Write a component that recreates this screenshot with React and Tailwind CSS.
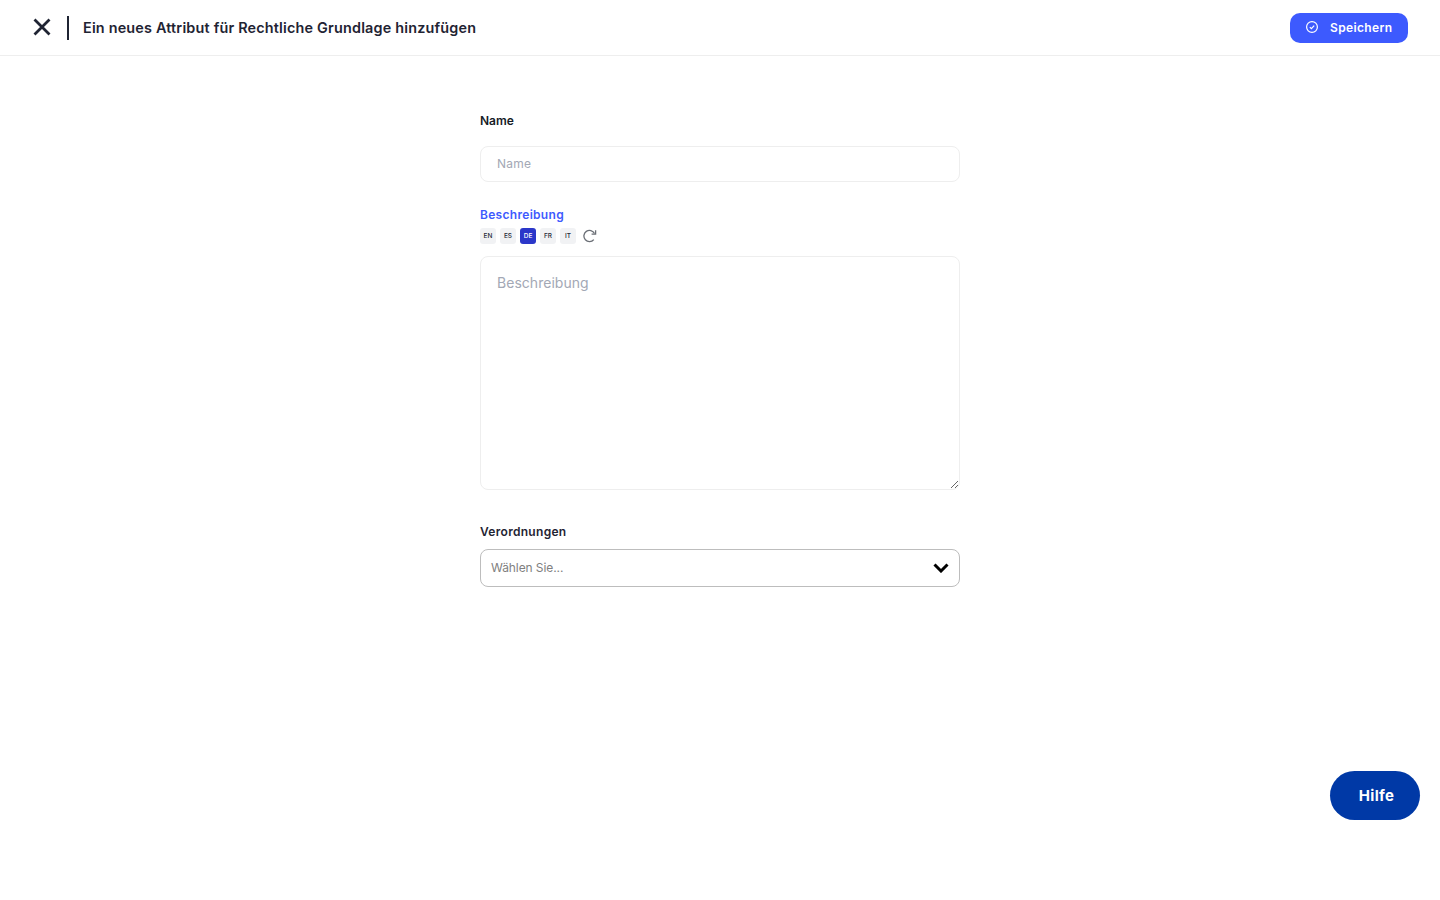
import { useState } from 'react'

const languages = ['EN', 'ES', 'DE', 'FR', 'IT']

function LangChip({ code, active, onClick }) {
  return (
    <button
      onClick={onClick}
      className={`flex h-4 w-4 items-center justify-center rounded-[3px] pt-px text-[6.5px] font-medium ${
        active ? 'bg-[#2b37c9] text-white' : 'bg-[#f1f2f4] text-[#1f2937]'
      }`}
    >
      {code}
    </button>
  )
}

export default function App() {
  const [lang, setLang] = useState('DE')

  return (
    <div className="min-h-[900px] bg-white font-['Inter',sans-serif] text-[#1f2433]">
      {/* Top bar */}
      <header className="flex h-[56px] items-center justify-between border-b border-[#eeeeee] pl-[27.5px] pr-[32px]">
        <div className="flex items-center">
          <button className="flex h-7 w-7 items-center justify-center pb-px">
            <svg width="18" height="18" viewBox="0 0 18 18" fill="none" stroke="currentColor" strokeWidth="2.8">
              <path d="M1.5 1.5 16.5 16.5M16.5 1.5 1.5 16.5" />
            </svg>
          </button>
          <div className="ml-[11px] h-6 w-[2px] bg-[#1f2433]" />
          <h1 className="ml-[14.5px] text-[14.4px] font-semibold tracking-[0.19px]">
            Ein neues Attribut für Rechtliche Grundlage hinzufügen
          </h1>
        </div>
        <button className="flex h-[30px] w-[118px] items-center rounded-[10px] bg-[#3d5afe] pl-[16px] text-[12px] font-semibold tracking-[0.35px] text-white">
          <svg width="12" height="12" viewBox="0 0 12 12" fill="none" stroke="currentColor" strokeWidth="1.2" className="-mt-px">
            <circle cx="6" cy="6" r="5.4" />
            <path d="M3.8 6.1 5.4 7.6 8.2 4.6" />
          </svg>
          <span className="ml-[12px]">Speichern</span>
        </button>
      </header>

      <main className="mx-auto w-[480px] pt-[57px]">
        <label className="block text-[12px] font-semibold leading-[15px] text-[#161b26]">Name</label>
        <input
          placeholder="Name"
          className="mt-[18px] block h-[36px] w-full rounded-[8px] border border-[#eeeeee] px-4 pb-[2px] text-[12px] tracking-[0.2px] outline-none placeholder:text-[#a3a8b5]"
        />

        <label className="mt-[25px] block text-[12px] font-semibold leading-[15px] tracking-[0.3px] text-[#3d5afe]">
          Beschreibung
        </label>
        <div className="mt-[6px] flex items-center gap-1">
          {languages.map((code) => (
            <LangChip key={code} code={code} active={lang === code} onClick={() => setLang(code)} />
          ))}
          <svg width="14" height="14" viewBox="0 0 14 14" fill="none" stroke="#6b6f76" strokeWidth="1.3" className="ml-[3px]">
            <path d="M10.8 10.6A5.6 5.6 0 1 1 11.5 4.5" />
            <path d="M12.6 1.2V5.2H8.6" />
          </svg>
        </div>
        <textarea
          placeholder="Beschreibung"
          className="mt-[12px] block h-[234px] w-full rounded-[8px] border border-[#eeeeee] px-4 py-[16px] text-[14px] leading-[20px] tracking-[0.03px] outline-none placeholder:text-[#a3a8b5]"
        />

        <label className="mt-[34px] block text-[12px] font-semibold leading-[15px] tracking-[0.3px]">
          Verordnungen
        </label>
        <div className="mt-[10px] flex h-[38px] items-center justify-between rounded-[8px] border border-[#bdbdbd] px-[10px]">
          <span className="text-[12px] tracking-[-0.08px] text-[#808080]">Wählen Sie...</span>
          <svg width="16" height="10" viewBox="0 0 16 10" fill="none" stroke="#000" strokeWidth="3">
            <path d="M1.5 1.5 8 8 14.5 1.5" />
          </svg>
        </div>
      </main>

      <button className="absolute left-[1330px] top-[771px] h-[49px] w-[90px] rounded-full bg-[#0039a6] pl-[3px] pt-[2px] text-[15px] font-bold tracking-[0.3px] text-white">
        Hilfe
      </button>
    </div>
  )
}
